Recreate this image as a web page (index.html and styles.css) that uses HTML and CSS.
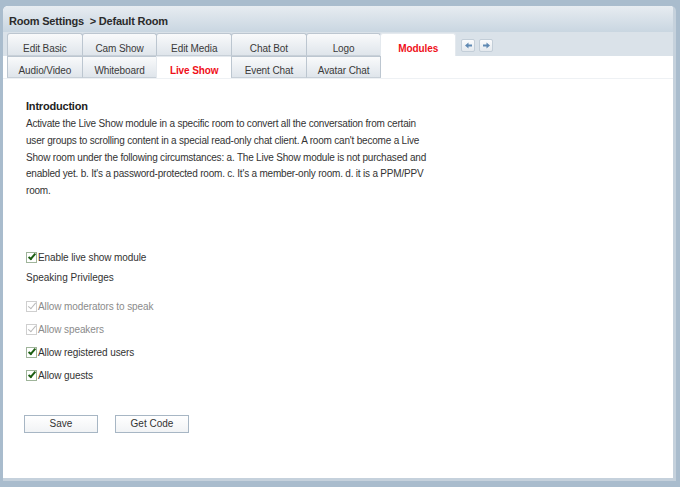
FILE: index.html
```html
<!DOCTYPE html>
<html>
<head>
  <meta charset="UTF-8">
  <title>Room Settings</title>
  <link rel="stylesheet" href="styles.css">
</head>
<body>

  <div class="panel">
    <div class="header">Room Settings&nbsp; &gt; Default Room</div>

    <div class="tabstrip">
      <div class="tab">Edit Basic</div>
      <div class="tab">Cam Show</div>
      <div class="tab">Edit Media</div>
      <div class="tab">Chat Bot</div>
      <div class="tab">Logo</div>
      <div class="tab active">Modules</div>
      <div class="arrows">
        <span class="arrow"><svg width="7" height="7" viewBox="0 0 7 7"><path d="M0 3.5 L3.5 0.5 L3.5 2.5 L7 2.5 L7 4.5 L3.5 4.5 L3.5 6.5 Z" fill="#5f89b3"/></svg></span>
        <span class="arrow"><svg width="7" height="7" viewBox="0 0 7 7"><path d="M7 3.5 L3.5 0.5 L3.5 2.5 L0 2.5 L0 4.5 L3.5 4.5 L3.5 6.5 Z" fill="#5f89b3"/></svg></span>
      </div>
    </div>

    <div class="body">
      <div class="tabrow">
        <div class="tab">Audio/Video</div>
        <div class="tab">Whiteboard</div>
        <div class="tab active">Live Show</div>
        <div class="tab">Event Chat</div>
        <div class="tab">Avatar Chat</div>
      </div>

      <div class="content">
        <h3>Introduction</h3>
        <p class="intro">Activate the Live Show module in a specific room to convert all the conversation from certain user groups to scrolling content in a special read-only chat client. A room can't become a Live Show room under the following circumstances: a. The Live Show module is not purchased and enabled yet. b. It's a password-protected room. c. It's a member-only room. d. it is a PPM/PPV room.</p>

        <label class="check enable"><span class="box"></span>Enable live show module</label>
        <div class="subhead">Speaking Privileges</div>

        <div class="options">
          <label class="check disabled"><span class="box"></span>Allow moderators to speak</label>
          <label class="check disabled"><span class="box"></span>Allow speakers</label>
          <label class="check"><span class="box"></span>Allow registered users</label>
          <label class="check"><span class="box"></span>Allow guests</label>
        </div>

        <div class="buttons">
          <button class="btn">Save</button>
          <button class="btn">Get Code</button>
        </div>
      </div>
    </div>
  </div>

</body>
</html>
```

FILE: styles.css
```css
body {
  margin: 0;
  padding: 0;
  background-color: #a9bccd;
  font-family: Tahoma, "Liberation Sans", Arial, sans-serif;
  font-size: 10px;
  color: #333;
}
*, *:before, *:after {
  box-sizing: border-box;
}

.panel {
  margin: 6px 4px 0 3px;
  width: 673px;
  height: 475px;
  border-radius: 5px 5px 0 0;
  background-color: #fff;
  border-right: 3px solid #c5d1dc;
  border-bottom: 3px solid #c5d1dc;
  overflow: hidden;
  display: flex;
  flex-direction: column;
}

.header {
  height: 26px;
  padding: 9px 0 0 6px;
  font-size: 11px;
  font-weight: bold;
  letter-spacing: -0.2px;
  color: #2b2b2b;
  background: linear-gradient(#e7ecf1, #c9d6e1);
}

.tabstrip {
  display: flex;
  height: 24px;
  padding: 1px 0 0 4px;
  background-color: #dae2e9;
}

.tab {
  width: 75.7px;
  height: 23px;
  padding-top: 9px;
  text-align: center;
  white-space: nowrap;
  color: #3a3a3a;
  letter-spacing: -0.1px;
  border: 1px solid #bcc6d0;
  border-bottom-color: #c8d0d8;
  margin-right: -1px;
  border-radius: 3px 3px 0 0;
  background: linear-gradient(#f9fafb, #dfe5eb);
}
.tab.active {
  background: #fff;
  color: #f0101a;
  font-weight: bold;
  border-color: #e4e9ee;
  border-bottom: none;
}

.arrows {
  display: flex;
  gap: 4px;
  padding: 6px 0 0 6px;
}
.arrow {
  width: 14px;
  height: 13px;
  display: flex;
  align-items: center;
  justify-content: center;
  border: 1px solid #c3ced8;
  border-radius: 2px;
  background: linear-gradient(#fbfcfd, #e4e9ee);
}

.body {
  flex: 1;
  display: flex;
  flex-direction: column;
}

.tabrow {
  display: flex;
  padding-left: 4px;
}
.tabrow .tab {
  height: 22px;
  padding-top: 8px;
  border-radius: 0;
}

.content {
  flex: 1;
  padding: 0 0 0 23px;
  border-top: 1px solid #eef1f4;
}

h3 {
  margin: 21px 0 0 0;
  font-size: 11px;
  font-weight: bold;
  letter-spacing: -0.2px;
  color: #222;
}

.intro {
  width: 406px;
  margin: 4px 0 0 0;
  line-height: 16.8px;
  letter-spacing: -0.2px;
}

.check {
  display: flex;
  align-items: center;
  height: 23px;
  letter-spacing: -0.1px;
}
.check.enable {
  margin-top: 46px;
}
.box {
  width: 11px;
  height: 11px;
  margin-right: 1px;
  border: 1px solid #9fb49a;
  background: #fff;
  position: relative;
}
.box:after {
  content: '';
  position: absolute;
  left: 3px;
  top: -1px;
  width: 4px;
  height: 8px;
  border: solid #1d5e12;
  border-width: 0 2px 2px 0;
  transform: rotate(40deg);
}
.check.disabled {
  color: #8b8b8b;
}
.check.disabled .box {
  border-color: #cfcfcf;
}
.check.disabled .box:after {
  border-color: #b9b9b9;
  border-width: 0 1px 1px 0;
}

.subhead {
  height: 21px;
  padding-top: 3px;
  margin-bottom: 5px;
}

.buttons {
  display: flex;
  gap: 17px;
  margin: 28px 0 0 -2px;
}
.btn {
  width: 74px;
  height: 18px;
  padding: 0;
  font-family: inherit;
  font-size: 10px;
  color: #333;
  background: linear-gradient(#ffffff, #f1f3f5);
  border: 1px solid #a7b6c4;
  border-radius: 0;
}
```
